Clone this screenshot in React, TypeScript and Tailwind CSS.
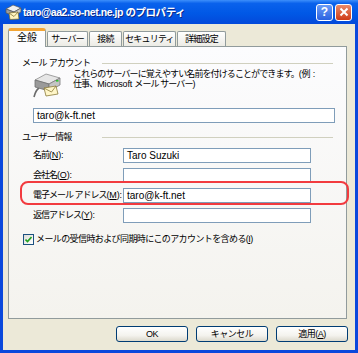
import React from "react";

const font = "font-['Liberation_Sans','Noto_Sans_CJK_JP',sans-serif]";

function ServerIcon() {
  return (
    <svg width="31" height="25" viewBox="0 0 31 25">
      {/* cable */}
      <path d="M7 15 C4 17 3 20 2 24" stroke="#6b6b6b" strokeWidth="1.6" fill="none" />
      {/* box top */}
      <path d="M3 7 L14 1 L28 5 L17 11 Z" fill="#e6e6e6" stroke="#8c8c8c" strokeWidth="0.8" />
      {/* box front */}
      <path d="M3 7 L17 11 L17 18 L3 14 Z" fill="#9a9a9a" stroke="#6e6e6e" strokeWidth="0.8" />
      {/* box side */}
      <path d="M17 11 L28 5 L28 12 L17 18 Z" fill="#c4c4c4" stroke="#7a7a7a" strokeWidth="0.8" />
      <rect x="24" y="7" width="2.5" height="1.6" fill="#2fbf2f" />
      {/* envelope */}
      <path d="M12 15 L24 13 L26 21 L14 23 Z" fill="#fff6c8" stroke="#8a7a3a" strokeWidth="0.8" />
      <path d="M12 15 L19.5 19 L24 13" fill="none" stroke="#8a7a3a" strokeWidth="0.8" />
    </svg>
  );
}

function TitleIcon() {
  return (
    <svg width="17" height="16" viewBox="0 0 17 16">
      <path d="M1 5 L8 1 L16 4 L9 8 Z" fill="#f0f0f0" stroke="#5a5a5a" strokeWidth="0.7" />
      <path d="M1 5 L9 8 L9 12 L1 9 Z" fill="#9c9c9c" stroke="#555" strokeWidth="0.7" />
      <path d="M9 8 L16 4 L16 8 L9 12 Z" fill="#c8c8c8" stroke="#555" strokeWidth="0.7" />
      <path d="M4 9 L13 8 L14 15 L5 15.5 Z" fill="#fff4c0" stroke="#7a6a2a" strokeWidth="0.7" />
      <path d="M4 9 L9 12.5 L13 8" fill="none" stroke="#7a6a2a" strokeWidth="0.7" />
    </svg>
  );
}

function TextBox({ value, className }: { value?: string; className: string }) {
  return (
    <div
      className={`h-[15px] border border-[#7f9db9] bg-white px-[3px] text-[10px] leading-[13px] text-black ${className}`}
    >
      {value}
    </div>
  );
}

function FieldRow({ label, keyChar, value }: { label: string; keyChar: string; value?: string }) {
  return (
    <div className="mt-[5px] flex h-[15px] items-center">
      <div className="w-[114px] pl-[24px] text-[9px] leading-[11px] tracking-[-1px] whitespace-nowrap">
        {label}
        <span className="tracking-[-0.2px]">
          (<u>{keyChar}</u>):
        </span>
      </div>
      <TextBox value={value} className="w-[188px]" />
    </div>
  );
}

function GroupHeading({ label }: { label: string }) {
  return (
    <div className="flex h-[11px] items-center">
      <div className="w-[93px] pl-[13px] text-[9px] leading-[11px] tracking-[-0.7px] whitespace-nowrap">
        {label}
      </div>
      <div className="mr-[13px] h-px flex-1 bg-[#d0d0bf]" />
    </div>
  );
}

function DialogButton({ children }: { children: React.ReactNode }) {
  return (
    <div className="flex h-[16px] w-[72px] items-center justify-center rounded-[3px] border border-[#003c74] bg-[linear-gradient(to_bottom,#ffffff_0%,#f4f3ee_60%,#dcd9cc_100%)] text-[9px] leading-[11px] tracking-[-0.5px]">
      {children}
    </div>
  );
}

export default function App() {
  const tabs = [
    { label: "サーバー", w: "w-[41px]" },
    { label: "接続", w: "w-[33px]" },
    { label: "セキュリティ", w: "w-[53px]" },
    { label: "詳細設定", w: "w-[49px]" },
  ];

  return (
    <div className={`flex h-[353px] w-[358px] flex-col bg-[#0a48dc] text-black ${font}`}>
      {/* title bar */}
      <div className="flex h-[24px] items-center bg-[linear-gradient(to_bottom,#3d8ffb_0%,#0a62ec_14%,#0058e6_55%,#0349da_100%)] pl-[5px] pr-[6px]">
        <TitleIcon />
        <div className="ml-[1px] flex-1 text-[10.5px] leading-[14px] font-bold tracking-[-0.45px] whitespace-nowrap text-white [text-shadow:1px_1px_0_#0a2a8a]">
          taro@aa2.so-net.ne.jp のプロパティ
        </div>
        <div className="flex h-[17px] w-[17px] items-center justify-center rounded-[3px] border border-white bg-[linear-gradient(to_bottom,#6b9cf7,#2a62e0)] text-[12px] leading-none font-bold text-white">
          ?
        </div>
        <div className="ml-[2px] flex h-[17px] w-[17px] items-center justify-center rounded-[3px] border border-white bg-[linear-gradient(to_bottom,#e98a6a,#cf3b17)]">
          <svg width="10" height="10" viewBox="0 0 10 10">
            <path d="M1.5 1.5 L8.5 8.5 M8.5 1.5 L1.5 8.5" stroke="#fff" strokeWidth="2" />
          </svg>
        </div>
      </div>

      {/* body */}
      <div className="mx-[3px] mb-[3px] flex flex-1 flex-col bg-[#ece9d8] pl-[5px] pr-[7px]">
        {/* tabs */}
        <div className="relative z-10 flex h-[22px] items-end pt-[4px]">
          <div className="-mb-px flex h-[19px] w-[38px] items-start justify-center rounded-t-[3px] border-x border-t-[3px] border-x-[#919b9c] border-t-[#f3a534] bg-[#fcfcfe] pt-[1px] text-[10px] leading-[12px]">
            全般
          </div>
          {tabs.map((t) => (
            <div
              key={t.label}
              className={`ml-[1px] flex h-[15px] ${t.w} items-center justify-center rounded-t-[2px] border-x border-t border-[#919b9c] bg-[linear-gradient(to_bottom,#ffffff,#ecebe5)] text-[9px] leading-[11px] tracking-[-0.8px] whitespace-nowrap`}
            >
              {t.label}
            </div>
          ))}
        </div>

        {/* panel */}
        <div className="relative mr-[1px] h-[273px] border border-[#919b9c] bg-[linear-gradient(to_bottom,#fcfcfe,#f4f3ee)] pt-[11px]">
          <GroupHeading label="メール アカウント" />
          <div className="flex">
            <div className="ml-[23px] mt-[4px]">
              <ServerIcon />
            </div>
            <div className="ml-[10px] text-[9px] leading-[10px] tracking-[-0.9px] whitespace-nowrap">
              これらのサーバーに覚えやすい名前を付けることができます。
              <span className="tracking-[-0.2px]">(例 :</span>
              <br />
              仕事、<span className="tracking-[-0.2px]">Microsoft </span>メール サーバー)
            </div>
          </div>
          <TextBox value="taro@k-ft.net" className="ml-[24px] mt-[10px] w-[302px]" />

          <div className="mt-[9px]">
            <GroupHeading label="ユーザー情報" />
          </div>
          <div className="mt-[1px]">
            <FieldRow label="名前" keyChar="N" value="Taro Suzuki" />
            <FieldRow label="会社名" keyChar="O" />
            <FieldRow label="電子メール アドレス" keyChar="M" value="taro@k-ft.net" />
            <FieldRow label="返信アドレス" keyChar="Y" />
          </div>

          <div className="ml-[14px] mt-[11px] flex items-center">
            <div className="flex h-[11px] w-[11px] items-center justify-center border border-[#1c5180] bg-[linear-gradient(135deg,#dcdcd7,#ffffff)]">
              <svg width="7" height="7" viewBox="0 0 7 7">
                <path d="M0.5 3.5 L2.5 5.5 L6.5 1" stroke="#21a121" strokeWidth="1.6" fill="none" />
              </svg>
            </div>
            <div className="ml-[2px] text-[9px] leading-[11px] tracking-[-0.6px] whitespace-nowrap">
              メールの受信時および同期時にこのアカウントを含める(<u>I</u>)
            </div>
          </div>

          {/* highlight annotation */}
          <div className="pointer-events-none absolute left-[11px] top-[134px] h-[24px] w-[329px] rounded-[8px] border-[2.5px] border-[#f23b3f]" />
        </div>

        {/* buttons */}
        <div className="mt-[7px] flex justify-end gap-[8px]">
          <DialogButton>OK</DialogButton>
          <DialogButton>キャンセル</DialogButton>
          <DialogButton>
            適用(<u>A</u>)
          </DialogButton>
        </div>
      </div>
    </div>
  );
}
